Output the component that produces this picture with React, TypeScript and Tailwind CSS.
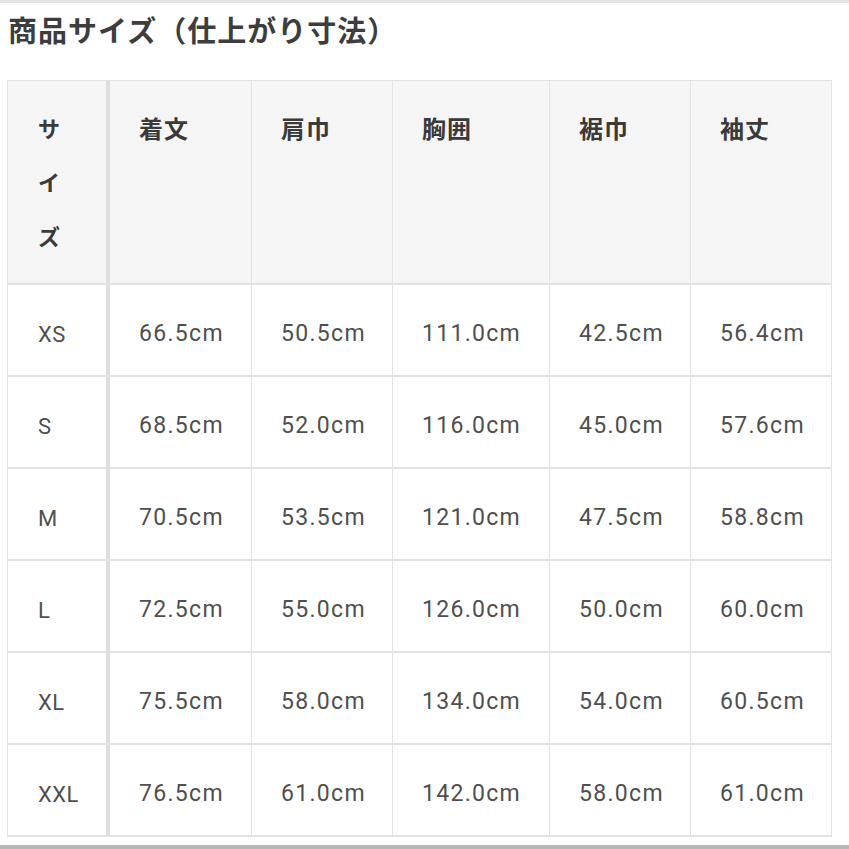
const cols = ["着文", "肩巾", "胸囲", "裾巾", "袖丈"]

const rows: [string, string[]][] = [
  ["XS", ["66.5cm", "50.5cm", "111.0cm", "42.5cm", "56.4cm"]],
  ["S", ["68.5cm", "52.0cm", "116.0cm", "45.0cm", "57.6cm"]],
  ["M", ["70.5cm", "53.5cm", "121.0cm", "47.5cm", "58.8cm"]],
  ["L", ["72.5cm", "55.0cm", "126.0cm", "50.0cm", "60.0cm"]],
  ["XL", ["75.5cm", "58.0cm", "134.0cm", "54.0cm", "60.5cm"]],
  ["XXL", ["76.5cm", "61.0cm", "142.0cm", "58.0cm", "61.0cm"]],
]

const grid = "grid grid-cols-[102px_142px_141px_157px_141px_141px]"

export default function App() {
  return (
    <div
      className="w-[849px] h-[849px] bg-white flex flex-col overflow-hidden"
      style={{ fontFamily: "Roboto, 'Noto Sans CJK JP', sans-serif" }}
    >
      <div className="h-[3px] bg-[#e4e4e4]" />
      <h2 className="pl-[8px] pt-[12px] text-[29px] leading-[34px] font-bold text-[#3d3d3d] tracking-[1px]">
        商品サイズ（仕上がり寸法）
      </h2>

      <div className="ml-[7px] mt-[31px] w-[825px] border-t border-l border-[#e2e2e2]">
        <div className={`${grid} h-[204px] bg-[#f5f5f5] border-b-2 border-[#e2e2e2]`}>
          <div className="border-r-4 border-[#dedede] pl-[30px] pt-[36px] flex flex-col gap-[28px] text-[22px] leading-[26px] font-bold text-[#3a3a3a]">
            <span>サ</span>
            <span>イ</span>
            <span>ズ</span>
          </div>
          {cols.map((c) => (
            <div
              key={c}
              className="border-r border-[#e2e2e2] pl-[29px] pt-[35px] text-[24px] leading-[28px] font-bold text-[#3a3a3a] tracking-[1px]"
            >
              {c}
            </div>
          ))}
        </div>

        {rows.map(([size, vals]) => (
          <div key={size} className={`${grid} h-[92px] border-b-2 border-[#e2e2e2]`}>
            <div className="border-r-4 border-[#dedede] pl-[30px] pt-[8px] flex items-center text-[22px] text-[#4f4f4f] tracking-[0.5px]">
              {size}
            </div>
            {vals.map((v, i) => (
              <div
                key={i}
                className="border-r border-[#e2e2e2] pl-[29px] pt-[8px] flex items-center text-[23px] text-[#4f4f4f] tracking-[1.3px]"
              >
                {v}
              </div>
            ))}
          </div>
        ))}
      </div>

      <div className="mt-auto h-[4px] bg-[#b8b8b8]" />
    </div>
  )
}
